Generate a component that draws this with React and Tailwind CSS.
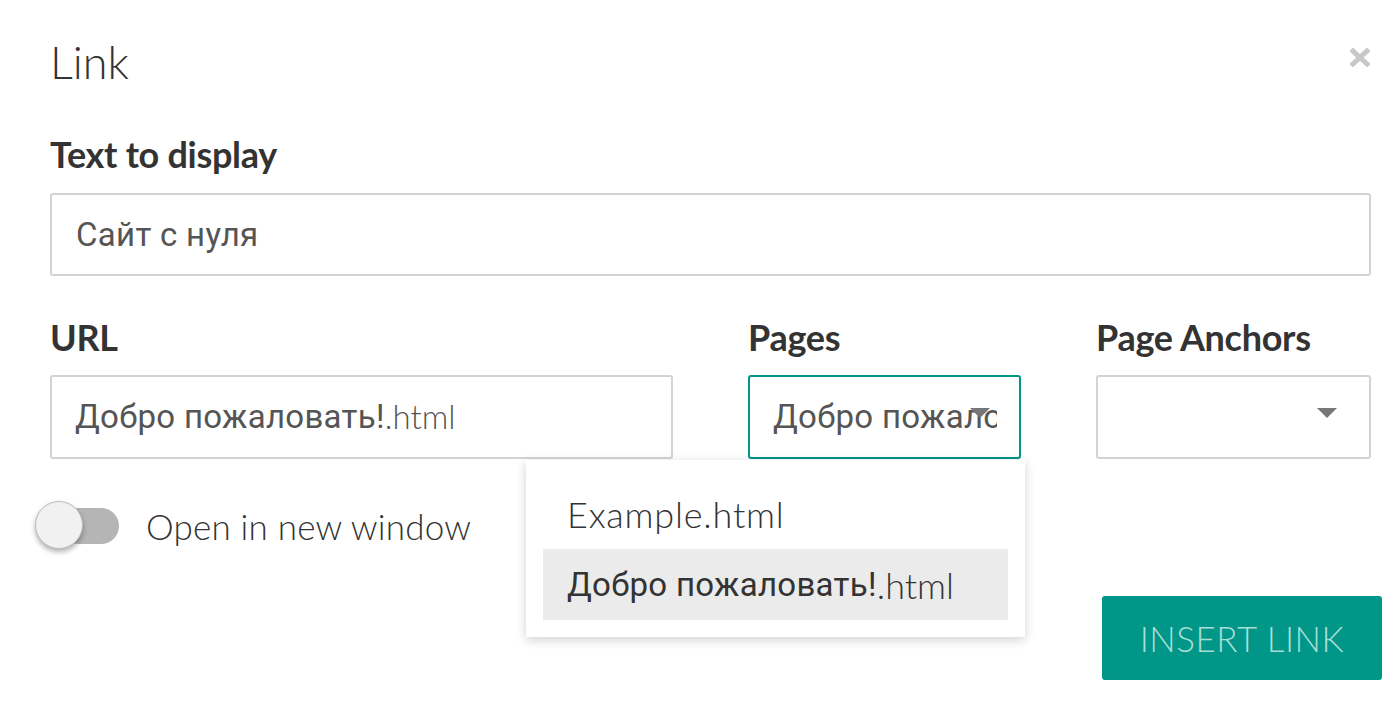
import React from "react";

const cyr = "font-['Roboto',sans-serif] tracking-[0.3px]";

function Caret({ className }) {
  return (
    <svg className={className} width="20" height="10" viewBox="0 0 20 10">
      <path d="M0 0 L20 0 L10 10 Z" fill="#777" />
    </svg>
  );
}

export default function App() {
  return (
    <div className="relative w-[1400px] h-[710px] overflow-hidden bg-white font-['Lato',sans-serif] text-[#333]">
      <div className="pl-[50px] pr-[29px] pt-[40px]">
        <div className="flex items-start justify-between">
          <h2 className="text-[45px] font-light leading-none text-[#333]">Link</h2>
          <svg className="mt-[8px] mr-[1px]" width="20" height="19" viewBox="0 0 20 19">
            <path d="M3 3 L17 16 M17 3 L3 16" stroke="#c8c8c8" strokeWidth="5" strokeLinecap="square" />
          </svg>
        </div>

        <div className="mt-[51px] text-[36px] font-bold leading-none tracking-[-0.3px] text-[#333]">Text to display</div>
        <div className="mt-[21px] flex h-[83px] items-center rounded-[3px] border-2 border-[#d3d3d3] pl-[24px] pr-[24px] text-[33px] text-[#555]">
          <span className={cyr}>Сайт с нуля</span>
        </div>

        <div className="mt-[43px] grid grid-cols-[623px_273px_275px] gap-x-[75px]">
          <div>
            <div className="text-[36px] font-bold leading-none tracking-[-0.3px]">URL</div>
            <div className="mt-[20px] flex h-[84px] items-center rounded-[3px] border-2 border-[#d3d3d3] pl-[23px] text-[33px] text-[#555]">
              <span className={cyr}>Добро пожаловать!</span>
              <span className="font-light">.html</span>
            </div>
          </div>
          <div className="relative">
            <div className="text-[36px] font-bold leading-none tracking-[-0.3px]">Pages</div>
            <div className="relative mt-[20px] flex h-[84px] items-center overflow-hidden rounded-[3px] border-2 border-[#009688] pl-[23px] pr-[22px] text-[33px] text-[#555]">
              <span className={`${cyr} block overflow-hidden whitespace-nowrap`}>Добро пожаловать!.html</span>
              <Caret className="absolute right-[29px] top-[31px]" />
            </div>
            <div className="absolute left-[-222px] top-[141px] z-10 w-[499px] bg-white px-[17px] pt-[18px] pb-[17px] shadow-[0_3px_10px_rgba(0,0,0,0.18)]">
              <div className="flex h-[71px] items-center pl-[24px] text-[36px] font-light tracking-[0.8px] text-[#333]">Example.html</div>
              <div className="flex h-[71px] items-center bg-[#ebebeb] pl-[24px] text-[33px] text-[#333]">
                <span className={cyr}>Добро пожаловать!</span>
                <span className="text-[36px] font-light">.html</span>
              </div>
            </div>
          </div>
          <div>
            <div className="text-[36px] font-bold leading-none tracking-[-0.3px]">Page Anchors</div>
            <div className="relative mt-[20px] h-[84px] rounded-[3px] border-2 border-[#d3d3d3]">
              <Caret className="absolute right-[32px] top-[31px]" />
            </div>
          </div>
        </div>

        <div className="mt-[41px] flex items-start justify-between">
          <div className="flex items-center">
            <div className="relative ml-[-15px] h-[50px] w-[86px]">
              <div className="absolute left-[26px] top-[7px] h-[36px] w-[58px] rounded-full bg-[#b5b5b5]" />
              <div className="absolute left-0 top-0 h-[48px] w-[48px] rounded-full border border-[#bcbcbc] bg-[#f1f1f1] shadow-[0_3px_5px_rgba(0,0,0,0.3)]" />
            </div>
            <span className="ml-[25px] text-[35px] font-light tracking-[0.2px] text-[#333]">Open in new window</span>
          </div>
          <button className="mt-[96px] mr-[-11px] flex h-[84px] w-[280px] items-center justify-center rounded-[3px] bg-[#009688] text-[35px] font-light tracking-[0.5px] text-[#a7ded6]">
            INSERT LINK
          </button>
        </div>
      </div>
    </div>
  );
}
